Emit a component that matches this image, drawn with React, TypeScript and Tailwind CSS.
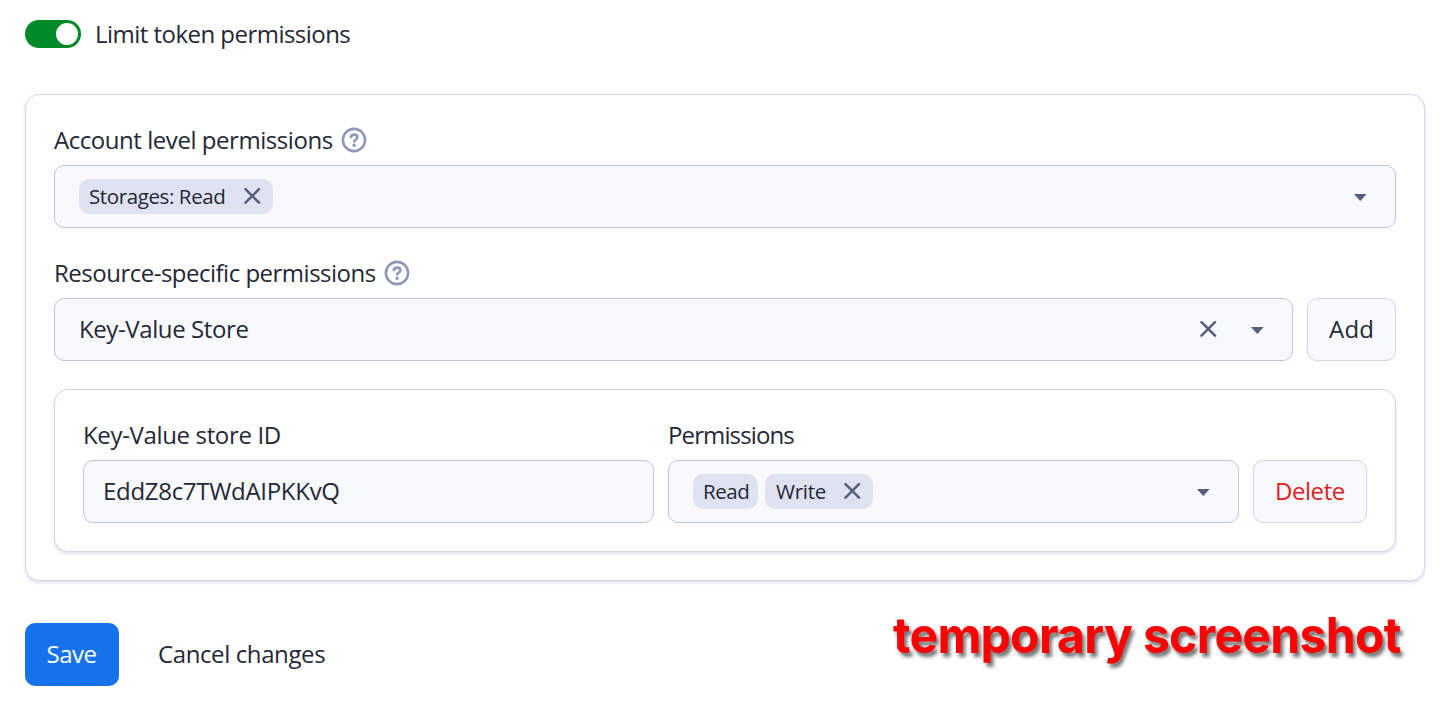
import type { ReactNode } from "react";

function CloseIcon() {
  return (
    <svg className="h-[17px] w-[17px] shrink-0 text-[#555f7d]" viewBox="0 0 17 17" fill="none" stroke="currentColor" strokeWidth="2.5" strokeLinecap="round">
      <path d="M1.5 1.2 15 14.7M15 1.2 1.5 14.7" />
    </svg>
  );
}

function Caret() {
  return (
    <svg className="mt-px h-[7px] w-[13px] shrink-0 text-[#555f7d]" viewBox="0.5 0 13 7" fill="currentColor">
      <path d="M1.1 0h11.4q.8 0 .2.6L7.3 6.6q-.5.5-1 0L.9.6Q.3 0 1.1 0Z" />
    </svg>
  );
}

function HelpIcon() {
  return (
    <svg className="h-[26px] w-[26px] shrink-0 text-[#8e97b8]" viewBox="0 0 26 26" fill="none" stroke="currentColor" strokeWidth="2.6" strokeLinecap="round" strokeLinejoin="round">
      <circle cx="13" cy="13" r="11.1" />
      <path d="M9.8 10C10.3 8.5 11.5 7.6 13.1 7.6c1.9 0 3.3 1.2 3.3 2.8 0 2.2-3.2 2.4-3.2 4" />
      <circle cx="13.1" cy="18.3" r="1.7" fill="currentColor" stroke="none" />
    </svg>
  );
}

function Label({ children, className }: { children: ReactNode; className: string }) {
  return (
    <div className="mb-1.5 flex h-9 items-center whitespace-nowrap">
      <span className={`pb-[3px] ${className}`}>{children}</span>
    </div>
  );
}

function Chip({ children, className }: { children: ReactNode; className: string }) {
  return (
    <span className={`flex h-[35px] items-center justify-between rounded-[10px] bg-[#dfe2f1] pl-2.5 text-[20.5px] whitespace-nowrap ${className}`}>
      {children}
    </span>
  );
}

const field = "flex h-[63px] items-center rounded-[10px] border border-[#bfc5e0] bg-[#f8f9fd] whitespace-nowrap";
const button = "flex h-[63px] shrink-0 items-center rounded-[10px] border border-[#d0d4e9] bg-[#f8f9fd] pb-0.5 whitespace-nowrap";
const card = "border border-[#d0d5ea] bg-white shadow-[0_2px_3px_rgba(50,60,110,0.14)]";

export default function App() {
  return (
    <main className="h-[709px] w-[1448px] overflow-hidden bg-white pt-5 pr-[23px] pl-[25px] font-['Open_Sans',sans-serif] text-[24px] leading-9 text-[#242836]">
      <div className="flex h-7 items-center">
        <button className="flex h-7 w-14 items-center justify-end rounded-full bg-[#008a27] pr-[3px]" aria-label="Limit token permissions">
          <span className="h-[22px] w-[22px] rounded-full bg-white" />
        </button>
        <span className="ml-3.5 tracking-[-0.53px] whitespace-nowrap">Limit token permissions</span>
      </div>

      <section className={`mt-[46px] rounded-[14px] p-7 ${card}`}>
        <div className="flex items-start">
          <Label className="w-[287px] tracking-[-0.45px]">Account level permissions</Label>
          <span className="mt-1"><HelpIcon /></span>
        </div>
        <div className={`justify-between pr-7 pl-6 ${field}`}>
          <Chip className="w-[194px] pr-3">
            <span className="pb-0.5 tracking-[-0.39px]">Storages: Read</span>
            <CloseIcon />
          </Chip>
          <Caret />
        </div>

        <div className="mt-7 flex items-start">
          <Label className="w-[330px] tracking-[-0.5px]">Resource-specific permissions</Label>
          <span className="mt-1"><HelpIcon /></span>
        </div>
        <div className="flex gap-3.5">
          <div className={`flex-1 pr-7 pl-6 ${field}`}>
            <span className="flex-1 pb-0.5 tracking-[-0.4px]">Key-Value Store</span>
            <CloseIcon />
            <span className="ml-[34px] flex"><Caret /></span>
          </div>
          <button className={`w-[89px] pl-[21px] tracking-[0.2px] ${button}`}>Add</button>
        </div>

        <div className={`mt-7 flex items-end gap-3.5 rounded-[14px] p-7 ${card}`}>
          <div className="flex-1">
            <Label className="tracking-[-0.35px]">Key-Value store ID</Label>
            <div className={`pl-[19px] ${field}`}>
              <span className="pb-0.5 tracking-[-0.3px]">EddZ8c7TWdAIPKKvQ</span>
            </div>
          </div>
          <div className="flex-1">
            <Label className="tracking-[-0.88px]">Permissions</Label>
            <div className={`justify-between pr-7 pl-6 ${field}`}>
              <div className="flex gap-[7px]">
                <Chip className="w-[65px]"><span className="pb-0.5 tracking-[-0.43px]">Read</span></Chip>
                <Chip className="w-[108px] pr-3">
                  <span className="pb-0.5 pl-px tracking-[-0.27px]">Write</span>
                  <CloseIcon />
                </Chip>
              </div>
              <Caret />
            </div>
          </div>
          <button className={`w-[114px] pl-[21px] tracking-[-0.45px] text-[#e02020] ${button}`}>Delete</button>
        </div>
      </section>

      <footer className="mt-[42px] flex">
        <button className="flex h-[63px] w-[94px] items-center rounded-[10px] bg-[#1672eb] pb-0.5 pl-[21.5px] tracking-[-0.5px] text-white">Save</button>
        <button className="ml-[39px] flex h-[63px] items-center pb-0.5 tracking-[-0.39px] whitespace-nowrap">Cancel changes</button>
        <div className="mt-[-20px] ml-auto flex h-[63px] w-[532px] origin-left scale-x-[0.96] items-center font-['Inter',sans-serif] text-[50px] font-[650] tracking-[-0.69px] whitespace-nowrap text-[#ff0000] [text-shadow:3px_4px_4px_rgba(0,0,0,0.55)]">
          temporary screenshot
        </div>
      </footer>
    </main>
  );
}
